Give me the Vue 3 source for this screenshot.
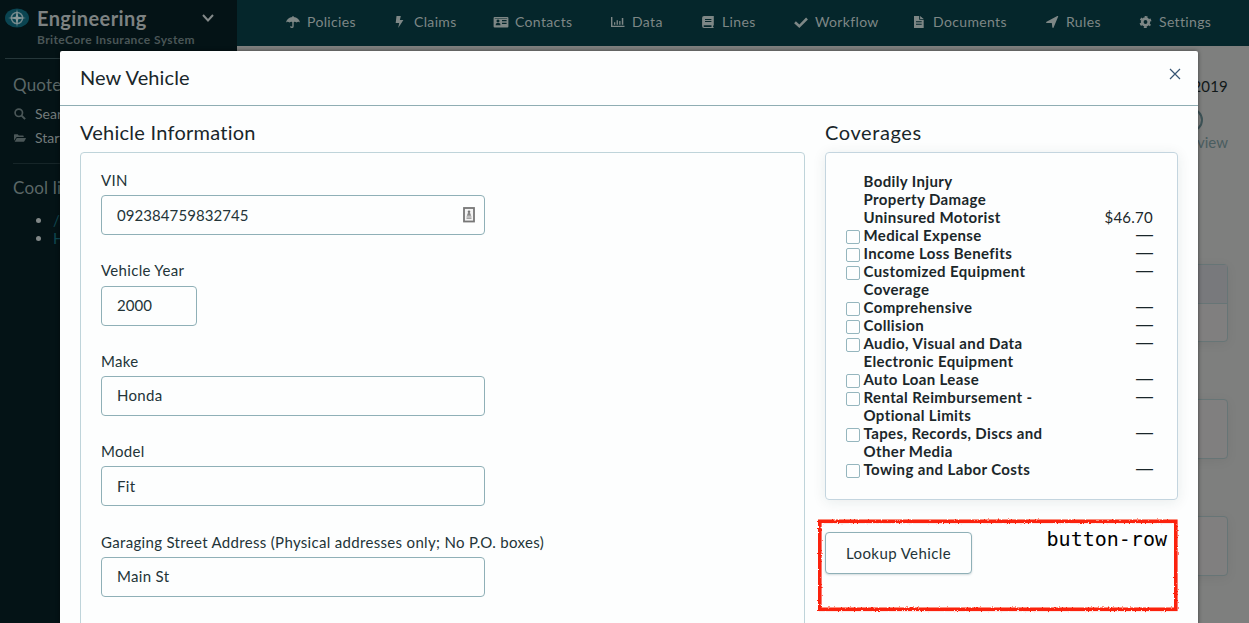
<script setup>
const navItems = [
  { label: 'Policies', icon: 'umbrella' },
  { label: 'Claims', icon: 'bolt' },
  { label: 'Contacts', icon: 'card' },
  { label: 'Data', icon: 'chart' },
  { label: 'Lines', icon: 'book' },
  { label: 'Workflow', icon: 'check' },
  { label: 'Documents', icon: 'file' },
  { label: 'Rules', icon: 'arrow' },
  { label: 'Settings', icon: 'gear' },
]

const fields = [
  { label: 'VIN', value: '092384759832745', key: true, wide: true },
  { label: 'Vehicle Year', value: '2000', number: true },
  { label: 'Make', value: 'Honda', wide: true },
  { label: 'Model', value: 'Fit', wide: true },
  { label: 'Garaging Street Address (Physical addresses only; No P.O. boxes)', value: 'Main St', wide: true },
]

const coverages = [
  { lines: ['Bodily Injury'] },
  { lines: ['Property Damage'] },
  { lines: ['Uninsured Motorist'], price: '$46.70' },
  { lines: ['Medical Expense'], box: true },
  { lines: ['Income Loss Benefits'], box: true },
  { lines: ['Customized Equipment', 'Coverage'], box: true },
  { lines: ['Comprehensive'], box: true },
  { lines: ['Collision'], box: true },
  { lines: ['Audio, Visual and Data', 'Electronic Equipment'], box: true },
  { lines: ['Auto Loan Lease'], box: true },
  { lines: ['Rental Reimbursement -', 'Optional Limits'], box: true },
  { lines: ['Tapes, Records, Discs and', 'Other Media'], box: true },
  { lines: ['Towing and Labor Costs'], box: true },
]
</script>

<template>
  <div class="screen">
    <aside class="sidebar">
      <div class="brand">
        <svg class="logo" width="24" height="20" viewBox="0 0 24 20">
          <ellipse cx="12" cy="10" rx="12" ry="9.6" fill="#0a4451" />
          <circle cx="12" cy="10" r="5.6" fill="none" stroke="#71878b" stroke-width="1.5" />
          <path d="M12 1l1.200 7.800L21 10l-7.800 1.200L12 19l-1.200-7.800L3 10l7.800-1.200z" fill="#8a9899" />
        </svg>
        <span class="brand-name">Engineering</span>
        <svg class="chevron" width="12" height="8" viewBox="0 0 12 8"><path d="M1 1l5 5.500L11 1" fill="none" stroke="#838989" stroke-width="2" /></svg>
      </div>
      <div class="brand-sub">BriteCore Insurance System</div>
      <hr class="rule first" />
      <h3>Quotes</h3>
      <div class="side-link">
        <svg width="12" height="12" viewBox="0 0 12 12"><circle cx="4.800" cy="4.800" r="3.700" fill="none" stroke="#4b5758" stroke-width="1.700" /><path d="M7.600 7.600l3.500 3.500" stroke="#4b5758" stroke-width="2" /></svg>
        <span>Search</span>
      </div>
      <div class="side-link">
        <svg width="12" height="12" viewBox="0 0 13 12"><path d="M0 9V2.600Q0 2 .6 2H4l1.200 1.300h4.600q.7 0 .7.700v1H3.200q-.7 0-1 .6zM.7 10l2.100-3.600q.2-.4.7-.4h9q.7 0 .4.600l-1.700 3q-.2.400-.7.400z" fill="#4b5758" /></svg>
        <span>Start</span>
      </div>
      <hr class="rule second" />
      <h3>Cool links</h3>
      <ul>
        <li><a>/r</a></li>
        <li><a>H</a></li>
      </ul>
    </aside>

    <div class="page">
      <nav>
        <div v-for="n in navItems" :key="n.label" class="nav-item">
          <svg width="16" height="14" viewBox="0 0 16 14" fill="#7e8786">
            <g v-if="n.icon === 'umbrella'">
              <path d="M1 7.600Q2.100 2.500 7.400 2V1h1.200v1q5.300.5 6.400 5.600-1.700-1.500-3.400 0-1.800-1.600-3.600 0-1.800-1.600-3.600 0Q2.700 6.100 1 7.600z" />
              <path d="M8 6.500v4.700q0 1.200-1.100 1.200t-1.100-1.200" fill="none" stroke="#7e8786" stroke-width="1.400" />
            </g>
            <path v-else-if="n.icon === 'bolt'" d="M4.500 1h4.300l-.9 3.900h3.500L6.200 13l1-5H3.700z" />
            <path v-else-if="n.icon === 'card'" fill-rule="evenodd" d="M1.600 2h12.800q1 0 1 1v8.500q0 .9-1 .9H1.600q-1 0-1-.9V3q0-1 1-1zM1.800 3.200v.5h12.400v-.5zM5 4.600a1.500 1.500 0 1 0 .01 0zM2.600 10.300h4.900q0-2.200-1.500-2.300H4.200q-1.600.1-1.600 2.300zM9 5.100v1.100h4.600V5.100zm0 2.700v1.100h4.600V7.800z" />
            <path v-else-if="n.icon === 'chart'" d="M1 2h1.400v8.700h12.100V12H1zM4 7.200h1.300v2.600H4zM6.600 5.200h1.300v4.600H6.600zM9.200 6h1.300v3.800H9.200zM11.800 3h1.500v6.800h-1.500z" />
            <path v-else-if="n.icon === 'book'" fill-rule="evenodd" d="M4 1h9.800v9l-.7 1v1l.7.400v.600H4q-1.900-.1-1.900-2V3Q2.100 1 4 1zM5 4v1h6.400V4zm0 2v.9h6.400V6zM4.300 10.300q-.8 0-.8.800t.8.800h7.200v-1.600z" />
            <path v-else-if="n.icon === 'check'" d="M2 7.300L6.300 11.300 14 3.500" fill="none" stroke="#7e8786" stroke-width="2.600" />
            <path v-else-if="n.icon === 'file'" fill-rule="evenodd" d="M3 1h5.200v3.700h4.500V13H3zM9.100 1l3.600 3h-3.600zM5 6.200v1h5.700v-1zm0 2.600v1h5.700v-1z" />
            <path v-else-if="n.icon === 'arrow'" d="M14.300 1.200L9.600 12.400q-.7 1.300-1.300-.1L7.800 8H2.700q-1.400-.4-.2-1.200L13.300 1.100q.8-.3 1 .1z" />
            <g v-else>
              <circle cx="8.500" cy="7" r="3.300" fill="none" stroke="#7e8786" stroke-width="2.800" />
              <circle cx="8.500" cy="7" r="5.100" fill="none" stroke="#7e8786" stroke-width="1.800" stroke-dasharray="2.670 2.670" stroke-dashoffset="1.330" transform="rotate(30 8.500 7)" />
            </g>
          </svg>
          <span>{{ n.label }}</span>
        </div>
      </nav>
      <div class="behind">
        <div class="date">2019</div>
        <div class="step"></div>
        <div class="review">Review</div>
        <div class="panel table"><div class="thead"></div></div>
        <div class="panel one"></div>
        <div class="panel two"></div>
      </div>
    </div>

    <section class="modal">
      <header>
        <h2 class="title">New Vehicle</h2>
        <svg width="12" height="12" viewBox="0 0 12 12"><path d="M1 1l10 10M11 1L1 11" stroke="#365574" stroke-width="1.200" /></svg>
      </header>
      <div class="content">
        <div class="left">
          <h2>Vehicle Information</h2>
          <div class="form">
            <div v-for="f in fields" :key="f.label" class="field">
              <label>{{ f.label }}</label>
              <div class="input" :class="{ wide: f.wide, short: f.number }">
                <span :class="{ num: f.key || f.number }">{{ f.value }}</span>
                <svg v-if="f.key" width="12" height="16" viewBox="0 0 12 16">
                  <rect x="1" y="1" width="10" height="13.500" fill="#f4f4f4" stroke="#777" stroke-width="1.800" />
                  <circle cx="6" cy="4.700" r="1.300" fill="#777" />
                  <path d="M5.300 5h1.400l1.500 3.700H3.800zM3.500 9.500h5v1h-5zM3.500 11.300h5v.8h-5z" fill="#888" />
                </svg>
              </div>
            </div>
          </div>
        </div>
        <div class="right">
          <h2 class="cv">Coverages</h2>
          <div class="coverages">
            <div v-for="c in coverages" :key="c.lines[0]" class="cov">
              <i :class="{ box: c.box }"></i>
              <div class="name"><div v-for="l in c.lines" :key="l">{{ l }}</div></div>
              <span v-if="c.price" class="price">{{ c.price }}</span>
              <span v-else-if="c.box" class="dash">—</span>
            </div>
          </div>
          <div class="button-row">
            <svg class="frame" width="366" height="98" viewBox="0 0 366 98">
              <filter id="rough" x="-5%" y="-10%" width="110%" height="120%">
                <feTurbulence type="fractalNoise" baseFrequency="0.7" numOctaves="2" seed="4" />
                <feDisplacementMap in="SourceGraphic" scale="2.600" xChannelSelector="R" yChannelSelector="G" />
              </filter>
              <rect x="5.800" y="5.300" width="356" height="88" fill="none" stroke="#fb200c" stroke-width="3.600" filter="url(#rough)" />
            </svg>
            <button><span>Lookup Vehicle</span></button>
            <code>button-row</code>
          </div>
        </div>
      </div>
    </section>
  </div>
</template>

<style>
body { overflow: hidden; }
</style>

<style scoped>
* { box-sizing: border-box; }
.screen { position: relative; display: flex; width: 1249px; height: 623px; overflow: hidden; background: #7e7f7e; font-family: Lato, "Noto Sans", sans-serif; font-size: 15px; color: #233438; white-space: nowrap; }
h2, h3, ul { margin: 0; padding: 0; font-weight: 400; }
svg { display: block; flex: none; }

.sidebar { width: 237px; height: 623px; background: #041316; color: #7d8484; flex: none; }
.brand { display: flex; align-items: center; height: 34px; padding: 4px 0 0 5px; }
.logo { margin-bottom: 3px; }
.chevron { margin-bottom: 2px; }
.brand-name { margin-left: 8px; width: 165px; font-size: 20px; font-weight: 700; line-height: 28px; padding-bottom: 2px; letter-spacing: 0.4px; color: #7d8282; }
.brand-sub { margin-top: -1px; padding-left: 37px; font-size: 12px; line-height: 14px; font-weight: 700; letter-spacing: 0.4px; color: #4a5657; }
.rule { border: 0; height: 1px; background: #26373a; margin: 0; }
.rule.first { margin: 11px 5px 0; }
.rule.second { margin: 13px 13px 0; background: #162528; }
h3 { padding-left: 13px; font-size: 17px; line-height: 24px; margin-top: 14px; margin-bottom: 5px; letter-spacing: 0.2px; color: #5b6767; }
.rule.second + h3 { margin-top: 12px; margin-bottom: 11px; }
.side-link { display: flex; align-items: center; gap: 9px; height: 24px; padding-left: 14px; font-size: 14px; color: #737b7b; }
.side-link span { padding-bottom: 1px; }
ul { list-style: none; }
li { display: flex; align-items: center; height: 18px; padding-left: 36px; }
li::before { content: ""; width: 5px; height: 5px; border-radius: 50%; background: #818787; margin-right: 12px; }
li a { color: #0f4650; }

.page { width: 1012px; }
nav { height: 46px; background: #05262b; display: grid; grid-template-columns: 107px 101px 117px 90px 93px 118px 133px 93px 100px; padding-left: 48px; color: #7e8786; font-size: 14px; letter-spacing: 0.35px; }
.nav-item { display: flex; align-items: center; gap: 6px; height: 44px; }
.nav-item span { padding-bottom: 1px; }
.behind { display: flex; flex-direction: column; align-items: flex-end; padding-right: 21px; }
.date { margin-top: 30px; line-height: 20px; color: #111819; letter-spacing: 0.2px; }
.step { margin: 12px 25px 0 0; width: 24px; height: 24px; border-radius: 50%; border: 2px solid #3e5458; }
.review { line-height: 20px; color: #4a5d60; }
.panel { width: 200px; border: 1px solid #677576; border-radius: 4px; background: #807f7f; box-shadow: 0 2px 12px rgba(0, 0, 0, .06); }
.table { margin-top: 112px; height: 78px; }
.thead { height: 39px; background: #78797c; border-bottom: 1px solid #677576; }
.one { margin-top: 57px; height: 60px; }
.two { margin-top: 57px; height: 60px; }

.modal { position: absolute; left: 60px; top: 51px; width: 1138px; height: 600px; background: #fdfefe; border-radius: 2px 2px 0 0; box-shadow: 0 0 4px rgba(0, 0, 0, .5); }
header { display: flex; align-items: center; justify-content: space-between; height: 55px; padding: 0 17px 0 20px; border-bottom: 1px solid #8fadb3; }
header svg { margin-bottom: 8px; }
h2 { font-size: 20px; line-height: 26px; color: #19262a; letter-spacing: 0.25px; }
h2.title { margin-bottom: 2px; letter-spacing: 0.1px; }
h2.cv { letter-spacing: 0.6px; }
.content { display: flex; gap: 20px; padding: 13px 20px 0; }
.left { width: 725px; }
.right { width: 353px; }
.form { margin-top: 7px; height: 520px; padding: 17px 20px; border: 1px solid #bfd4da; border-radius: 4px; }
.field { display: flex; flex-direction: column; height: 90.400px; letter-spacing: 0.32px; }
label { line-height: 20px; margin-bottom: 5px; }
.input { display: flex; align-items: center; justify-content: space-between; width: 96px; height: 40px; padding: 0 9px 0 15px; border: 1px solid #8fb0b7; border-radius: 4px; flex: none; }
.input span { padding-bottom: 1px; }
.input .num { letter-spacing: 0.07px; }
.input.wide { width: 384px; }
.input.short { margin-top: 0.600px; }
.coverages { margin-top: 7px; height: 348px; padding: 19px 24px 0 20px; border: 1px solid #c4d5df; border-radius: 4px; box-shadow: 0 2px 14px rgba(20, 50, 60, .09); color: #1b272a; line-height: 18px; }
.cov { display: flex; }
.cov i { width: 14px; margin-right: 3.500px; flex: none; }
.cov i.box { height: 14px; margin-top: 4px; border: 1px solid #95b6be; border-radius: 2px; }
.name { flex: 1; font-weight: 700; letter-spacing: 0.38px; }
.price { letter-spacing: 0.25px; }
.dash { font-family: "Liberation Sans", sans-serif; font-size: 17px; height: 18px; }
.button-row { position: relative; display: flex; justify-content: space-between; align-items: flex-start; margin-top: 32px; padding-right: 11px; }
.frame { position: absolute; left: -11px; top: -16px; }
button { width: 147px; height: 42px; padding: 0 0 1px; border: 1px solid #8fb0b7; border-radius: 4px; background: #fdfefe; font: inherit; letter-spacing: 0.4px; color: #233438; box-shadow: 0 1px 2px rgba(20, 60, 70, .18); }
code { font: 20px/24px "DejaVu Sans Mono", monospace; color: #000; margin-top: -5px; }
</style>
